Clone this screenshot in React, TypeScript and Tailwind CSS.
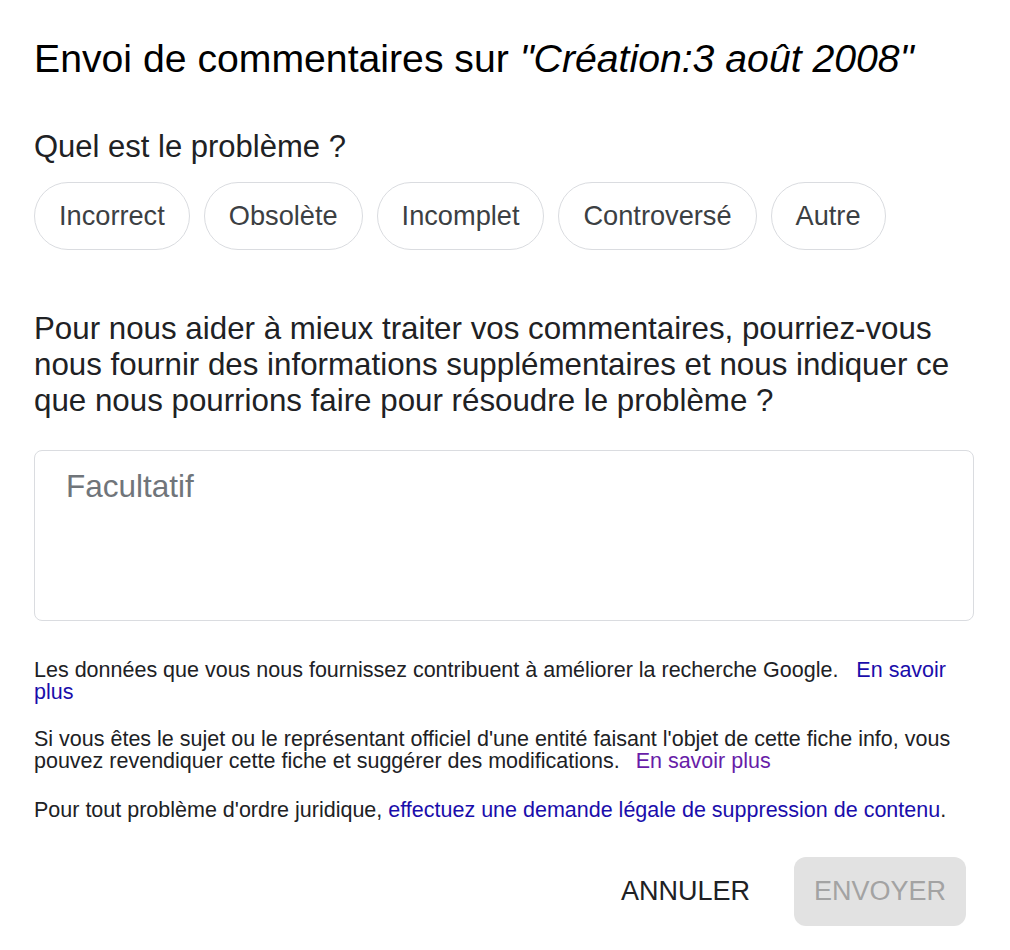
const chips = ["Incorrect", "Obsolète", "Incomplet", "Controversé", "Autre"];

export default function App() {
  return (
    <div className="min-h-[950px] bg-white font-['Liberation_Sans',Arial,sans-serif] text-[#202124]">
      <div className="w-[974px] pl-[34px] pt-[37px]">
        <h1 className="text-[39.2px] leading-[44px] font-normal text-[#000]">
          Envoi de commentaires sur <span className="italic">"Création:3 août 2008"</span>
        </h1>

        <p className="mt-[48px] text-[31px] leading-[36px]">Quel est le problème ?</p>

        <div className="mt-[17px] flex gap-[14px]">
          {chips.map((label) => (
            <button
              key={label}
              className="rounded-full border border-[#dadce0] bg-white px-[24px] py-[17px] text-[27.2px] leading-[32px] text-[#3c4043]"
            >
              {label}
            </button>
          ))}
        </div>

        <p className="mt-[61px] text-[31.3px] leading-[36px]">
          Pour nous aider à mieux traiter vos commentaires, pourriez-vous nous fournir des informations
          supplémentaires et nous indiquer ce que nous pourrions faire pour résoudre le problème ?
        </p>

        <textarea
          placeholder="Facultatif"
          className="mt-[31px] block h-[171px] w-full resize-none rounded-[8px] border border-[#dadce0] px-[31px] pt-[17px] text-[31.5px] leading-[36px] outline-none placeholder:text-[#70757a]"
        />

        <div className="mt-[38px] text-[21.5px] leading-[22px] text-[#202124]">
          <p>
            Les données que vous nous fournissez contribuent à améliorer la recherche Google.
            <a className="ml-[18px] text-[#1a0dab]">En savoir plus</a>
          </p>
          <p className="mt-[25px]">
            Si vous êtes le sujet ou le représentant officiel d'une entité faisant l'objet de cette fiche
            info, vous pouvez revendiquer cette fiche et suggérer des modifications.
            <a className="ml-[16px] text-[#681da8]">En savoir plus</a>
          </p>
          <p className="mt-[27px]">
            Pour tout problème d'ordre juridique,{" "}
            <a className="text-[#1a0dab]">effectuez une demande légale de suppression de contenu</a>.
          </p>
        </div>

        <div className="mt-[36px] flex justify-end gap-[24px] pr-[8px]">
          <button className="h-[69px] rounded-[12px] px-[20px] text-[27px] text-[#202124]">ANNULER</button>
          <button disabled className="h-[69px] rounded-[12px] bg-[#e2e2e2] px-[20px] text-[27px] text-[#a3a3a3]">
            ENVOYER
          </button>
        </div>
      </div>
    </div>
  );
}
